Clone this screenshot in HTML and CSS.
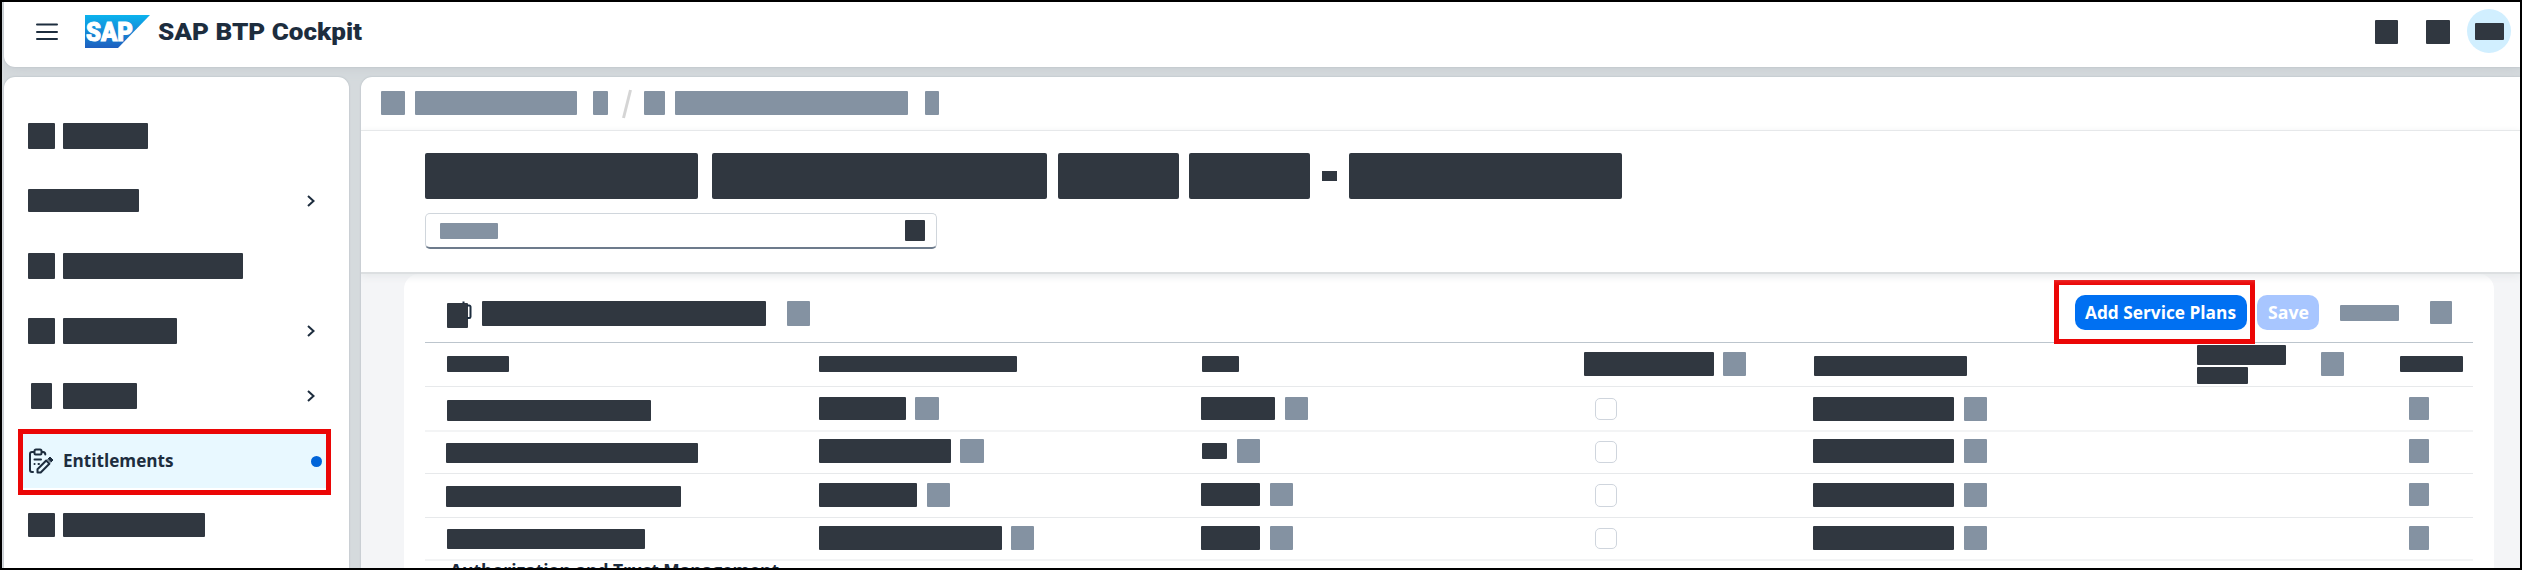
FILE: index.html
```html
<!DOCTYPE html>
<html lang="en">
<head>
<meta charset="utf-8">
<title>SAP BTP Cockpit</title>
<link rel="stylesheet" href="styles.css">
</head>
<body>
<div class="app">
  <header class="shell">
    <svg class="burger" viewBox="0 0 22 18"><path d="M1 1.500h20M1 9h20M1 16h20"/></svg>
    <svg class="logo" viewBox="0 0 66 33">
      <defs><linearGradient id="g" x1="0" y1="0" x2="0" y2="1"><stop offset="0" stop-color="#0bb3ee"/><stop offset="1" stop-color="#1e5fbf"/></linearGradient></defs>
      <path fill="url(#g)" d="M1 0h65L34 33H1z"/>
      <text class="logo-text" x="2" y="26" textLength="47" lengthAdjust="spacingAndGlyphs">SAP</text>
    </svg>
    <h1 class="product"><svg class="product-svg" viewBox="0 0 206 40"><text x="0" y="28.500" textLength="204" lengthAdjust="spacingAndGlyphs">SAP BTP Cockpit</text></svg></h1>
    <div class="shell-actions">
      <i class="b" style="width:23px;height:24px"></i>
      <i class="b" style="width:24px;height:24px"></i>
      <span class="avatar"><i class="b" style="width:29px;height:17px"></i></span>
    </div>
  </header>
  <div class="body">
    <nav class="nav">
      <div class="item"><i class="b" style="width:27px;height:26px"></i><i class="b" style="width:85px;height:26px"></i></div>
      <div class="item"><i class="b" style="width:111px;height:23px"></i><svg class="chev" viewBox="0 0 8 12"><path d="M1 1l5.500 5L1 11"/></svg></div>
      <div class="item"><i class="b" style="width:27px;height:26px"></i><i class="b" style="width:180px;height:26px"></i></div>
      <div class="item"><i class="b" style="width:27px;height:26px"></i><i class="b" style="width:114px;height:26px"></i><svg class="chev" viewBox="0 0 8 12"><path d="M1 1l5.500 5L1 11"/></svg></div>
      <div class="item"><i class="b narrow" style="width:21px;height:26px"></i><i class="b" style="width:74px;height:26px"></i><svg class="chev" viewBox="0 0 8 12"><path d="M1 1l5.500 5L1 11"/></svg></div>
      <div class="item selected">
        <svg class="clip" viewBox="0 0 26 26"><path d="M5 24H4A2 2 0 0 1 2 22V6A2 2 0 0 1 4 4h2.500M13.500 4h1.500A2.500 2.500 0 0 1 17.300 6.500M6.500 3A1.500 1.500 0 0 1 8 1.500h4A1.500 1.500 0 0 1 13.500 3v2.500a1 1 0 0 1-1 1h-5a1 1 0 0 1-1-1zM6.500 11.500h6.500M10.500 16h.5M6.500 16h.1M9.500 24.500v-3.200l8.700-8.800 3.200 3.200-8.700 8.800z"/><path class="solid" d="M20 11l2-2 3 3-2 2z"/></svg>
        <span class="label"><svg class="label-svg" viewBox="0 0 114 30"><text x="1" y="20" textLength="110.500" lengthAdjust="spacingAndGlyphs">Entitlements</text></svg></span>
        <span class="dot"></span>
      </div>
      <div class="item"><i class="b" style="width:27px;height:24px"></i><i class="b" style="width:142px;height:24px"></i></div>
    </nav>
    <main class="main">
      <div class="crumbs">
        <i class="b g" style="width:24px"></i><i class="b g" style="width:162px;margin-left:10px"></i><i class="b g" style="width:15px;margin-left:16px"></i>
        <svg class="slash" viewBox="0 0 10 30"><path d="M8.500 1L1.500 29"/></svg>
        <i class="b g" style="width:21px"></i><i class="b g" style="width:233px;margin-left:10px"></i><i class="b g" style="width:14px;margin-left:17px"></i>
      </div>
      <section class="head">
        <div class="title">
          <i class="b" style="width:273px"></i><i class="b" style="width:335px;margin-left:14px"></i><i class="b" style="width:121px;margin-left:11px"></i><i class="b" style="width:121px;margin-left:10px"></i><i class="b dash" style="width:15px"></i><i class="b" style="width:273px"></i>
        </div>
        <div class="search"><i class="b g" style="width:58px;height:16px"></i><i class="b" style="width:20px;height:21px"></i></div>
      </section>
      <section class="stage">
        <div class="card">
          <div class="toolbar">
            <span class="ticon"><i class="b" style="width:21px;height:25px"></i><svg class="peek" viewBox="0 0 14 20"><path d="M3.500 1.500h2M8 4.500h2.200a1.300 1.300 0 0 1 1.300 1.300v10a1.300 1.300 0 0 1-1.300 1.300H8"/></svg></span>
            <i class="b" style="width:284px;height:25px"></i><i class="b g" style="width:23px;height:25px;margin-left:21px"></i>
            <div class="actions">
              <span class="mark"></span>
              <button class="btn add"><svg class="btn-svg" viewBox="0 0 154 30"><text x="1" y="21" textLength="151" lengthAdjust="spacingAndGlyphs">Add Service Plans</text></svg></button>
              <button class="btn save"><svg class="save-svg" viewBox="0 0 42 30"><text x="1" y="21" textLength="41" lengthAdjust="spacingAndGlyphs">Save</text></svg></button>
              <i class="b g" style="width:59px;height:16px;margin-left:21px"></i><i class="b g" style="width:22px;height:23px;margin-left:31px"></i>
            </div>
          </div>
          <div class="table">
            <div class="row th">
              <div class="c" style="padding-top:13px"><i class="b" style="width:62px;height:16px"></i></div>
              <div class="c" style="padding-top:13px"><i class="b" style="width:198px;height:16px"></i></div>
              <div class="c in1" style="padding-top:13px"><i class="b" style="width:37px;height:16px"></i></div>
              <div class="c" style="padding-top:9px"><i class="b" style="width:130px;height:24px"></i><i class="b g" style="width:23px;height:24px;margin-left:9px"></i></div>
              <div class="c in1" style="padding-top:13px"><i class="b" style="width:153px;height:20px"></i></div>
              <div class="c" style="padding-top:2px"><span class="stack"><i class="b" style="width:89px;height:20px"></i><i class="b" style="width:51px;height:17px"></i></span><i class="b g" style="width:23px;height:24px;margin:7px 0 0 35px"></i></div>
              <div class="c" style="padding-top:13px"><i class="b" style="width:63px;height:16px"></i></div>
            </div>
            <div class="row soft">
              <div class="c" style="padding-top:13px"><i class="b" style="width:204px;height:21px"></i></div>
              <div class="c" style="padding-top:10px"><i class="b" style="width:87px;height:23px"></i><i class="b g" style="width:24px;height:23px;margin-left:9px"></i></div>
              <div class="c" style="padding-top:10px"><i class="b" style="width:74px;height:23px"></i><i class="b g" style="width:23px;height:23px;margin-left:10px"></i></div>
              <div class="c" style="padding-top:11px"><span class="check"></span></div>
              <div class="c" style="padding-top:10px"><i class="b" style="width:141px;height:24px"></i><i class="b g" style="width:23px;height:24px;margin-left:10px"></i></div>
              <div class="c"></div>
              <div class="c last" style="padding-top:10px"><i class="b g" style="width:20px;height:23px"></i></div>
            </div>
            <div class="row r2">
              <div class="c out1" style="padding-top:11px"><i class="b" style="width:252px;height:20px"></i></div>
              <div class="c" style="padding-top:7px"><i class="b" style="width:132px;height:24px"></i><i class="b g" style="width:24px;height:24px;margin-left:9px"></i></div>
              <div class="c in1" style="padding-top:7px"><i class="b" style="width:25px;height:16px;margin-top:4px"></i><i class="b g" style="width:23px;height:24px;margin-left:10px"></i></div>
              <div class="c" style="padding-top:9px"><span class="check"></span></div>
              <div class="c" style="padding-top:7px"><i class="b" style="width:141px;height:24px"></i><i class="b g" style="width:23px;height:24px;margin-left:10px"></i></div>
              <div class="c"></div>
              <div class="c last" style="padding-top:7px"><i class="b g" style="width:20px;height:24px"></i></div>
            </div>
            <div class="row r3">
              <div class="c out1" style="padding-top:12px"><i class="b" style="width:235px;height:21px"></i></div>
              <div class="c" style="padding-top:9px"><i class="b" style="width:98px;height:24px"></i><i class="b g" style="width:23px;height:24px;margin-left:10px"></i></div>
              <div class="c" style="padding-top:9px"><i class="b" style="width:59px;height:23px"></i><i class="b g" style="width:23px;height:23px;margin-left:10px"></i></div>
              <div class="c" style="padding-top:10px"><span class="check tall"></span></div>
              <div class="c" style="padding-top:9px"><i class="b" style="width:141px;height:24px"></i><i class="b g" style="width:23px;height:24px;margin-left:10px"></i></div>
              <div class="c"></div>
              <div class="c last" style="padding-top:9px"><i class="b g" style="width:20px;height:23px"></i></div>
            </div>
            <div class="row soft r4">
              <div class="c" style="padding-top:11px"><i class="b" style="width:198px;height:20px"></i></div>
              <div class="c" style="padding-top:8px"><i class="b" style="width:183px;height:24px"></i><i class="b g" style="width:23px;height:24px;margin-left:9px"></i></div>
              <div class="c" style="padding-top:8px"><i class="b" style="width:59px;height:24px"></i><i class="b g" style="width:23px;height:24px;margin-left:10px"></i></div>
              <div class="c" style="padding-top:10px"><span class="check short"></span></div>
              <div class="c" style="padding-top:8px"><i class="b" style="width:141px;height:24px"></i><i class="b g" style="width:23px;height:24px;margin-left:10px"></i></div>
              <div class="c"></div>
              <div class="c last" style="padding-top:8px"><i class="b g" style="width:20px;height:24px"></i></div>
            </div>
            <div class="cut"><svg class="cut-svg" viewBox="0 0 334 26"><text x="0" y="16" textLength="329" lengthAdjust="spacingAndGlyphs">Authorization and Trust Management</text></svg></div>
          </div>
        </div>
      </section>
    </main>
  </div>
</div>
</body>
</html>
```
FILE: styles.css
```css
* { box-sizing: border-box; }
html, body { height: 570px; overflow: hidden; }
body { margin: 0; font-family: "Open Sans", "Noto Sans", sans-serif; color: #1d2d3e; }
svg { display: block; overflow: visible; }
.app { width: 2522px; height: 570px; border: 2px solid #000; padding-left: 2px; background: #d5dadd; overflow: hidden; display: flex; flex-direction: column; gap: 10px; }
.b { display: block; flex: none; background: #303740; border-radius: 1px; }
.b.g { background: #8492a2; }

/* Shell bar */
.shell { flex: none; height: 65px; background: #fff; border-radius: 0 0 0 11px; box-shadow: 0 0 2px #b4bbc1, 0 2px 12px #c8cdd2; display: flex; align-items: flex-start; padding-left: 32px; }
.burger { width: 22px; height: 18px; margin-top: 21px; stroke: #1d2d3e; stroke-width: 2; stroke-linecap: round; fill: none; }
.logo { width: 66px; height: 33px; margin: 13px 0 0 26px; }
.logo-text { font: 900 26px Roboto, sans-serif; fill: #fff; stroke: #fff; stroke-width: 1; }
.product { margin: 9px 0 0 8px; }
.product-svg { width: 206px; height: 40px; font: 900 24px Roboto, sans-serif; fill: #1d2d3e; }
.shell-actions { margin-left: auto; display: flex; padding-top: 18px; padding-right: 9px; }
.shell-actions > .b + .b { margin-left: 28px; }
.avatar { width: 44px; height: 44px; margin: -11px 0 0 17px; border-radius: 50%; background: #d1efff; display: flex; align-items: center; justify-content: center; }

.body { flex: 1; min-height: 0; display: flex; gap: 12px; }

/* Side navigation */
.nav { width: 345px; flex: none; background: #fff; border-radius: 11px 11px 0 0; box-shadow: 0 0 2px #aab3ba; padding-top: 26px; overflow: hidden; }
.item { height: 65px; padding: 0 34px 0 24px; display: flex; align-items: center; gap: 8px; }
.item .narrow { margin: 0 3px; }
.chev { width: 8px; height: 12px; margin-left: auto; fill: none; stroke: #1d2d3e; stroke-width: 2; }
.item.selected { width: 313px; height: 66px; margin: 1px 0 0 14px; padding: 0 9px 0 5px; border: 5px solid #eb0606; background: linear-gradient(#e8f8ff 54px, #fff 54px); }
.clip { width: 26px; height: 26px; margin-top: -2px; fill: none; stroke: #1d2d3e; stroke-width: 2; stroke-linecap: round; stroke-linejoin: round; }
.clip .solid { fill: #1d2d3e; stroke-width: 1; }
.label-svg { width: 114px; height: 30px; font: 700 18px "Open Sans", sans-serif; fill: #1d2d3e; }
.dot { width: 11px; height: 11px; margin: -2px -5px 0 auto; border-radius: 50%; background: #0064d9; }
.item:last-child { height: 60px; }

/* Page */
.main { flex: 1; min-width: 0; background: #fff; border-radius: 11px 0 0 0; box-shadow: 0 0 2px #aab3ba; display: flex; flex-direction: column; overflow: hidden; }
.crumbs { height: 54px; flex: none; border-bottom: 1px solid #e7e9ea; padding: 14px 0 0 20px; display: flex; }
.crumbs .b { height: 24px; }
.slash { width: 10px; height: 30px; margin: -2px 12px 0 14px; fill: none; stroke: #d5d5d5; stroke-width: 3; }
.head { height: 143px; flex: none; border-bottom: 2px solid #dcdfe1; padding: 22px 0 0 64px; box-shadow: 0 2px 8px #e4e7e9; z-index: 1; }
.title { display: flex; }
.title .b { height: 46px; border-radius: 2px; }
.title .dash { height: 10px; margin: 18px 12px 0; border-radius: 0; }
.search { width: 512px; height: 36px; margin-top: 14px; border: 1px solid #d0d6dc; border-bottom: 2px solid #6d7b8c; border-radius: 5px; padding: 0 11px 0 14px; display: flex; align-items: center; justify-content: space-between; }
.stage { flex: 1; min-height: 0; background: #f4f5f7; padding: 0 26px 0 43px; }
.card { height: 294px; background: #fff; border-radius: 15px 15px 0 0; padding: 0 21px; }
.toolbar { height: 69px; border-bottom: 1px solid #bcc5cd; padding: 27px 21px 0 22px; display: flex; align-items: flex-start; }
.ticon { width: 35px; position: relative; padding-top: 2px; }
.peek { position: absolute; left: 12px; top: 0; width: 14px; height: 20px; fill: none; stroke: #1d2d3e; stroke-width: 2; }
.actions { margin: -6px 0 0 auto; height: 35px; display: flex; align-items: center; position: relative; }
.mark { position: absolute; left: -21px; top: -15px; width: 201px; height: 64px; border: 5px solid #eb0606; }
.btn { border: 0; padding: 0; height: 35px; border-radius: 10px; display: flex; align-items: center; justify-content: center; font: 700 18px "Open Sans", sans-serif; }
.btn text { fill: #fff; }
.add { width: 172px; background: #0070f2; }
.save { width: 62px; margin-left: 10px; background: #a8c6ff; }
.btn-svg { width: 154px; height: 30px; }
.save-svg { width: 42px; height: 30px; }

/* Table */
.row { height: 43px; border-bottom: 1px solid #e7e9eb; padding-left: 22px; display: grid; grid-template-columns: 372px 382px 383px 229px 384px 203px 1fr; }
.row.th { height: 44px; }
.row.soft { height: 45px; border-bottom: 2px solid #f3f4f5; }
.row.r2 { height: 42px; }
.row.r3 { height: 44px; }
.row.r4 { height: 43px; }
.c { display: flex; align-items: flex-start; }
.in1 { padding-left: 1px; }
.out1 { margin-left: -1px; }
.last { padding-left: 9px; }
.stack { width: 89px; display: flex; flex-direction: column; gap: 2px; }
.check { width: 22px; height: 22px; margin-left: 11px; border: 1px solid #cfd5dd; border-radius: 5px; }
.check.tall { height: 23px; }
.check.short { height: 21px; }
.cut { padding-left: 25px; }
.cut-svg { width: 334px; height: 26px; font: 700 18px "Open Sans", sans-serif; fill: #1d2d3e; }
```
